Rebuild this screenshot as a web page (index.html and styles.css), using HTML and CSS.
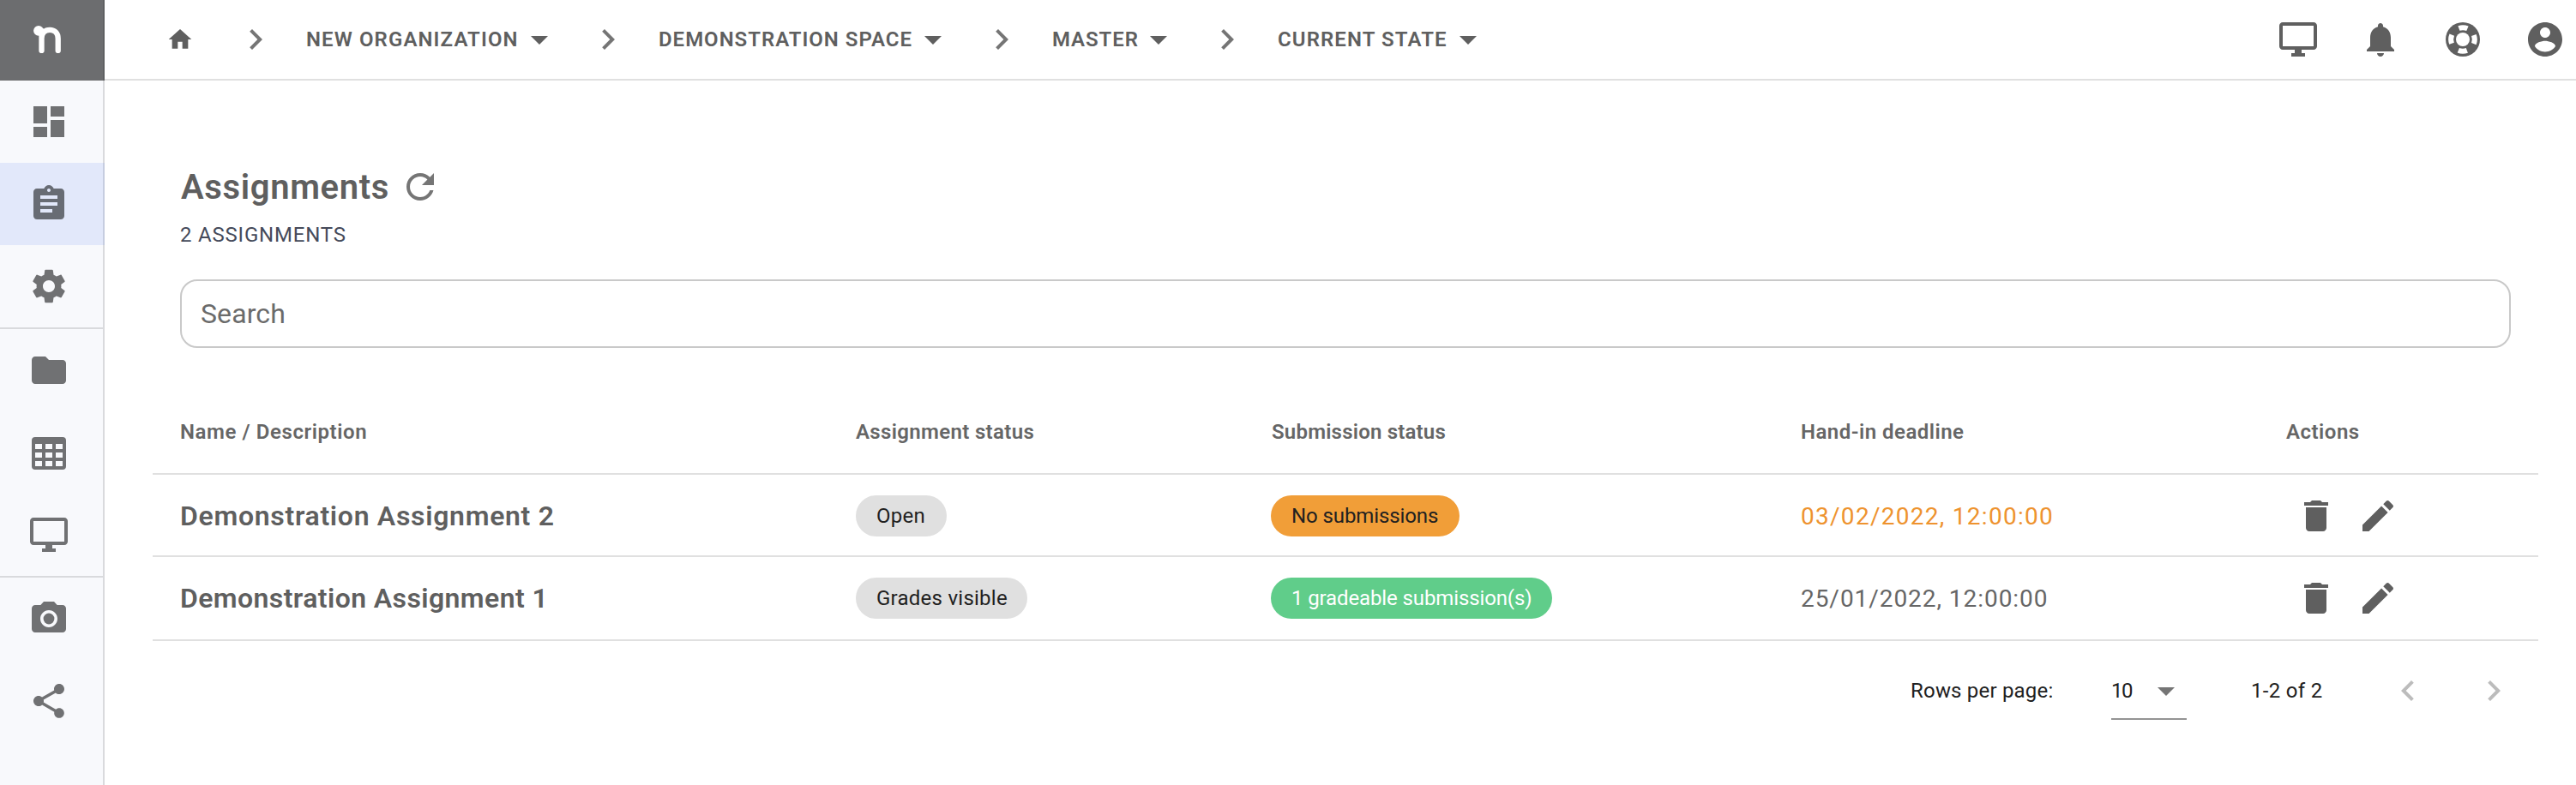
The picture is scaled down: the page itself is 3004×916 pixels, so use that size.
FILE: index.html
```
<!DOCTYPE html>
<html lang="en">
<head>
<meta charset="utf-8">
<title>Assignments</title>
<link rel="stylesheet" href="styles.css">
</head>
<body>
<svg class="defs" aria-hidden="true">
  <symbol id="home" viewBox="0 0 24 24"><path d="M10 20v-6h4v6h5v-8h3L12 3 2 12h3v8z"/></symbol>
  <symbol id="next" viewBox="0 0 24 24"><path d="M10 6 8.59 7.41 13.17 12l-4.58 4.59L10 18l6-6z"/></symbol>
  <symbol id="prev" viewBox="0 0 24 24"><path d="M15.41 7.41 14 6l-6 6 6 6 1.41-1.41L10.83 12z"/></symbol>
  <symbol id="drop" viewBox="0 0 24 24"><path d="m7 10 5 5 5-5z"/></symbol>
  <symbol id="monitor" viewBox="0 0 24 24"><path d="M21 2H3c-1.1 0-2 .9-2 2v12c0 1.1.9 2 2 2h7v2H8v2h8v-2h-2v-2h7c1.1 0 2-.9 2-2V4c0-1.1-.9-2-2-2zm0 14H3V4h18v12z"/></symbol>
  <symbol id="bell" viewBox="0 0 24 24"><path d="M12 22c1.1 0 2-.9 2-2h-4c0 1.1.89 2 2 2zm6-6v-5c0-3.07-1.64-5.64-4.5-6.32V4c0-.83-.67-1.5-1.5-1.5s-1.5.67-1.5 1.5v.68C7.63 5.36 6 7.92 6 11v5l-2 2v1h16v-1l-2-2z"/></symbol>
  <symbol id="buoy" viewBox="0 0 24 24"><circle cx="12" cy="12" r="10"/><circle cx="12" cy="12" r="4" fill="#fff"/><circle cx="12" cy="12" r="6.9" fill="none" stroke="#fff" stroke-width="3" stroke-dasharray="5.1 5.74" transform="rotate(-21.2 12 12)"/></symbol>
  <symbol id="account" viewBox="0 0 24 24"><path d="M12 2C6.48 2 2 6.48 2 12s4.48 10 10 10 10-4.48 10-10S17.52 2 12 2zm0 3c1.66 0 3 1.34 3 3s-1.34 3-3 3-3-1.34-3-3 1.34-3 3-3zm0 14.2c-2.5 0-4.71-1.28-6-3.22.03-1.99 4-3.08 6-3.08 1.99 0 5.97 1.09 6 3.08-1.29 1.94-3.5 3.22-6 3.22z"/></symbol>
  <symbol id="dashboard" viewBox="0 0 24 24"><path d="M3 13h8V3H3v10zm0 8h8v-6H3v6zm10 0h8V11h-8v10zm0-18v6h8V3h-8z"/></symbol>
  <symbol id="assignment" viewBox="0 0 24 24"><path d="M19 3h-4.18C14.4 1.84 13.3 1 12 1c-1.3 0-2.4.84-2.82 2H5c-1.1 0-2 .9-2 2v14c0 1.1.9 2 2 2h14c1.1 0 2-.9 2-2V5c0-1.1-.9-2-2-2zm-7 0c.55 0 1 .45 1 1s-.45 1-1 1-1-.45-1-1 .45-1 1-1zm2 14H7v-2h7v2zm3-4H7v-2h10v2zm0-4H7V7h10v2z"/></symbol>
  <symbol id="settings" viewBox="0 0 24 24"><path d="M19.14 12.94c.04-.3.06-.61.06-.94 0-.32-.02-.64-.07-.94l2.03-1.58c.18-.14.23-.41.12-.61l-1.92-3.32c-.12-.22-.37-.29-.59-.22l-2.39.96c-.5-.38-1.03-.7-1.62-.94l-.36-2.54c-.04-.24-.24-.41-.48-.41h-3.84c-.24 0-.43.17-.47.41l-.36 2.54c-.59.24-1.13.57-1.62.94l-2.39-.96c-.22-.08-.47 0-.59.22L2.74 8.87c-.12.21-.08.47.12.61l2.03 1.58c-.05.3-.09.63-.09.94s.02.64.07.94l-2.03 1.58c-.18.14-.23.41-.12.61l1.92 3.32c.12.22.37.29.59.22l2.39-.96c.5.38 1.03.7 1.62.94l.36 2.54c.05.24.24.41.48.41h3.84c.24 0 .44-.17.47-.41l.36-2.54c.59-.24 1.13-.56 1.62-.94l2.39.96c.22.08.47 0 .59-.22l1.92-3.32c.12-.22.07-.47-.12-.61l-2.01-1.58zM12 15.5c-1.93 0-3.5-1.57-3.5-3.5s1.57-3.5 3.5-3.5 3.5 1.57 3.5 3.5-1.57 3.5-3.5 3.5z"/></symbol>
  <symbol id="folder" viewBox="0 0 24 24"><path d="M10 4H4c-1.1 0-1.99.9-1.99 2L2 18c0 1.1.9 2 2 2h16c1.1 0 2-.9 2-2V8c0-1.1-.9-2-2-2h-8l-2-2z"/></symbol>
  <symbol id="grid" viewBox="0 0 24 24"><path fill-rule="evenodd" d="M4 3h16a2 2 0 0 1 2 2v15a2 2 0 0 1-2 2H4a2 2 0 0 1-2-2V5a2 2 0 0 1 2-2zM4 7v3h4V7zm6 0v3h4V7zm6 0v3h4V7zM4 12v3h4v-3zm6 0v3h4v-3zm6 0v3h4v-3zM4 17v3h4v-3zm6 0v3h4v-3zm6 0v3h4v-3z"/></symbol>
  <symbol id="camera" viewBox="0 0 24 24"><circle cx="12" cy="12" r="3.2"/><path d="M9 2 7.17 4H4c-1.1 0-2 .9-2 2v12c0 1.1.9 2 2 2h16c1.1 0 2-.9 2-2V6c0-1.1-.9-2-2-2h-3.17L15 2H9zm3 15c-2.76 0-5-2.24-5-5s2.24-5 5-5 5 2.24 5 5-2.24 5-5 5z"/></symbol>
  <symbol id="share" viewBox="0 0 24 24"><path d="M18 16.08c-.76 0-1.44.3-1.96.77L8.91 12.7c.05-.23.09-.46.09-.7s-.04-.47-.09-.7l7.05-4.11c.54.5 1.25.81 2.04.81 1.66 0 3-1.34 3-3s-1.34-3-3-3-3 1.34-3 3c0 .24.04.47.09.7L8.04 9.81C7.5 9.31 6.79 9 6 9c-1.66 0-3 1.34-3 3s1.34 3 3 3c.79 0 1.5-.31 2.04-.81l7.12 4.16c-.05.21-.08.43-.08.65 0 1.61 1.31 2.92 2.92 2.92 1.61 0 2.92-1.31 2.92-2.92s-1.31-2.92-2.92-2.92z"/></symbol>
  <symbol id="refresh" viewBox="0 0 24 24"><path d="M17.65 6.35C16.2 4.9 14.21 4 12 4c-4.42 0-7.99 3.58-7.99 8s3.57 8 7.99 8c3.73 0 6.84-2.55 7.73-6h-2.08c-.82 2.33-3.04 4-5.65 4-3.31 0-6-2.69-6-6s2.69-6 6-6c1.66 0 3.14.69 4.22 1.78L13 11h7V4l-2.35 2.35z"/></symbol>
  <symbol id="trash" viewBox="0 0 24 24"><path d="M6 19c0 1.1.9 2 2 2h8c1.1 0 2-.9 2-2V7H6v12zM19 4h-3.5l-1-1h-5l-1 1H5v2h14V4z"/></symbol>
  <symbol id="pencil" viewBox="0 0 24 24"><path d="M3 17.25V21h3.75L17.81 9.94l-3.75-3.75L3 17.25zM20.71 7.04c.39-.39.39-1.02 0-1.41l-2.34-2.34c-.39-.39-1.02-.39-1.41 0l-1.83 1.83 3.75 3.75 1.83-1.83z"/></symbol>
</svg>
<div class="app">
  <nav class="sidebar">
    <a class="logo"><svg viewBox="0 0 122 94"><circle cx="45" cy="35.8" r="5.9"/><path d="M48.5 36v22.9M48.5 45c0-7 4-10.2 9.6-10.2s9.6 3.6 9.6 10.2v13.9"/></svg></a>
    <a class="nav-item"><svg class="icon"><use href="#dashboard"/></svg></a>
    <a class="nav-item active"><svg class="icon"><use href="#assignment"/></svg></a>
    <a class="nav-item"><svg class="icon"><use href="#settings"/></svg></a>
    <hr>
    <a class="nav-item"><svg class="icon"><use href="#folder"/></svg></a>
    <a class="nav-item"><svg class="icon"><use href="#grid"/></svg></a>
    <a class="nav-item"><svg class="icon"><use href="#monitor"/></svg></a>
    <hr>
    <a class="nav-item"><svg class="icon"><use href="#camera"/></svg></a>
    <a class="nav-item"><svg class="icon"><use href="#share"/></svg></a>
  </nav>
  <div class="page">
    <header class="topbar">
      <div class="crumbs">
        <svg class="icon home"><use href="#home"/></svg>
        <svg class="icon sep"><use href="#next"/></svg><span class="crumb org">NEW ORGANIZATION</span><svg class="icon"><use href="#drop"/></svg>
        <svg class="icon sep"><use href="#next"/></svg><span class="crumb space">DEMONSTRATION SPACE</span><svg class="icon"><use href="#drop"/></svg>
        <svg class="icon sep"><use href="#next"/></svg><span class="crumb branch">MASTER</span><svg class="icon"><use href="#drop"/></svg>
        <svg class="icon sep"><use href="#next"/></svg><span class="crumb state">CURRENT STATE</span><svg class="icon"><use href="#drop"/></svg>
      </div>
      <div class="tools">
        <svg class="icon"><use href="#monitor"/></svg>
        <svg class="icon"><use href="#bell"/></svg>
        <svg class="icon"><use href="#buoy"/></svg>
        <svg class="icon"><use href="#account"/></svg>
      </div>
    </header>
    <main>
      <div class="heading"><h1>Assignments</h1><svg class="icon"><use href="#refresh"/></svg></div>
      <div class="count">2 ASSIGNMENTS</div>
      <div class="search">Search</div>
      <section class="table">
        <div class="row head"><span class="wide">Name / Description</span><span>Assignment status</span><span class="tight">Submission status</span><span class="deadline">Hand-in deadline</span><span class="act">Actions</span></div>
        <div class="row">
          <span class="name">Demonstration Assignment 2</span>
          <span><b class="chip open">Open</b></span>
          <span><b class="chip none">No submissions</b></span>
          <span class="date late">03/02/2022, 12:00:00</span>
          <span class="actions"><svg class="icon"><use href="#trash"/></svg><svg class="icon"><use href="#pencil"/></svg></span>
        </div>
        <div class="row last">
          <span class="name first">Demonstration Assignment 1</span>
          <span><b class="chip grades">Grades visible</b></span>
          <span><b class="chip gradeable">1 gradeable submission(s)</b></span>
          <span class="date">25/01/2022, 12:00:00</span>
          <span class="actions"><svg class="icon"><use href="#trash"/></svg><svg class="icon"><use href="#pencil"/></svg></span>
        </div>
      </section>
      <footer class="pager">
        <span class="label">Rows per page:</span>
        <span class="select"><span class="ten">10</span><svg class="icon"><use href="#drop"/></svg></span>
        <span class="range">1-2 of 2</span>
        <svg class="icon off"><use href="#prev"/></svg>
        <svg class="icon off"><use href="#next"/></svg>
      </footer>
    </main>
  </div>
</div>
</body>
</html>
```
FILE: styles.css
```
* { box-sizing: border-box; }
body { margin: 0; background: #fff; color: #5f5f5f; font: 400 24px/32px Roboto, "Liberation Sans", sans-serif; white-space: nowrap; overflow: hidden; }
.defs { display: none; }
.icon { width: 48px; height: 48px; flex: none; display: block; fill: #5f5f5f; }
.app { display: flex; height: 916px; }

.sidebar { width: 122px; flex: none; background: linear-gradient(to left, #d9dadd 2px, #f8f9fc 2px); }
.logo { display: block; height: 94px; background: linear-gradient(to left, #5f6062 2px, #6c6d6f 2px); }
.logo svg { display: block; width: 122px; height: 94px; fill: #fff; }
.logo path { fill: none; stroke: #fff; stroke-width: 6.3; stroke-linecap: round; }
.nav-item { display: flex; align-items: center; height: 96px; padding-left: 33px; }
.nav-item .icon { fill: #707173; }
.nav-item.active { background: linear-gradient(to left, #c6cde0 2px, #e2e8fa 2px); }
.nav-item.active .icon { fill: #686c74; }
.sidebar hr { margin: 0; border: 0; height: 2px; background: #d9dadd; }

.page { flex: 1; }
.topbar { display: flex; justify-content: space-between; height: 94px; border-bottom: 2px solid #e0e0e0; padding: 0 12px 0 72px; }
.crumbs, .tools { display: flex; align-items: center; }
.home { width: 32px; height: 32px; margin-right: 16px; }
.sep { margin: 0 35px 0 32px; fill: #757575; }
.crumb { font-weight: 600; letter-spacing: 1.1px; }
.org { width: 248px; }
.space { width: 296px; letter-spacing: .98px; }
.branch { width: 100px; letter-spacing: .9px; }
.state { width: 198px; }
.tools { gap: 48px; }

main { padding: 100px 44px 0 56px; }
.heading { display: flex; align-items: center; gap: 12px; height: 48px; padding-left: 33px; }
h1 { margin: 0; width: 243px; padding-top: 2px; font-size: 40px; font-weight: 600; letter-spacing: .65px; }
.heading .icon { fill: #757575; }
.count { margin: 16px 0 0 32px; color: #454a5a; letter-spacing: .8px; }
.search { display: flex; align-items: center; height: 80px; margin: 36px 32px 50px; padding-left: 22px; border: 2px solid #c9c9c9; border-radius: 20px; font-size: 32px; color: #6b6b6b; letter-spacing: .1px; }

.row { display: grid; grid-template-columns: 788px 484px 618px 565px 1fr; align-items: center; height: 96px; padding-left: 32px; box-shadow: inset 0 -2px #e0e0e0; }
.head { height: 98px; border-bottom: 2px solid #e0e0e0; box-shadow: none; font-weight: 600; letter-spacing: .34px; color: #666; }
.head .wide { letter-spacing: .58px; }
.head .tight { letter-spacing: .2px; padding-left: 1px; }
.head .deadline { letter-spacing: .48px; }
.head .act { letter-spacing: .5px; padding-left: 1px; }
.last { height: 98px; border-bottom: 2px solid #e0e0e0; box-shadow: none; }
.name { font-size: 32px; font-weight: 600; letter-spacing: .69px; }
.first { letter-spacing: .4px; }
.chip { display: block; height: 48px; border-radius: 24px; padding-left: 24px; line-height: 48px; font-weight: 400; background: #e0e0e0; color: #212121; letter-spacing: .25px; }
.open { width: 106px; }
.grades { width: 200px; }
.none { width: 220px; background: #f19e38; letter-spacing: -.1px; }
.gradeable { width: 328px; background: #60cd8a; color: #fff; letter-spacing: -.12px; }
.date { font-size: 28px; letter-spacing: .95px; color: #666; padding-top: 1px; }
.late { color: #ee932f; letter-spacing: 1.28px; }
.actions { display: flex; gap: 24px; padding-left: 12px; }

.pager { display: flex; align-items: center; height: 92px; margin-top: 12px; padding-left: 2050px; color: #212121; letter-spacing: .2px; }
.label { width: 234px; }
.select { display: flex; align-items: center; width: 88px; height: 68px; padding-top: 2px; border-bottom: 2px solid #949494; margin-right: 74px; }
.ten { width: 40px; letter-spacing: -1.6px; }
.select .icon { fill: #757575; }
.range { width: 160px; letter-spacing: .3px; padding-left: 1px; }
.off { fill: #bcbcbc; }
.off + .off { margin-left: 52px; }
```
